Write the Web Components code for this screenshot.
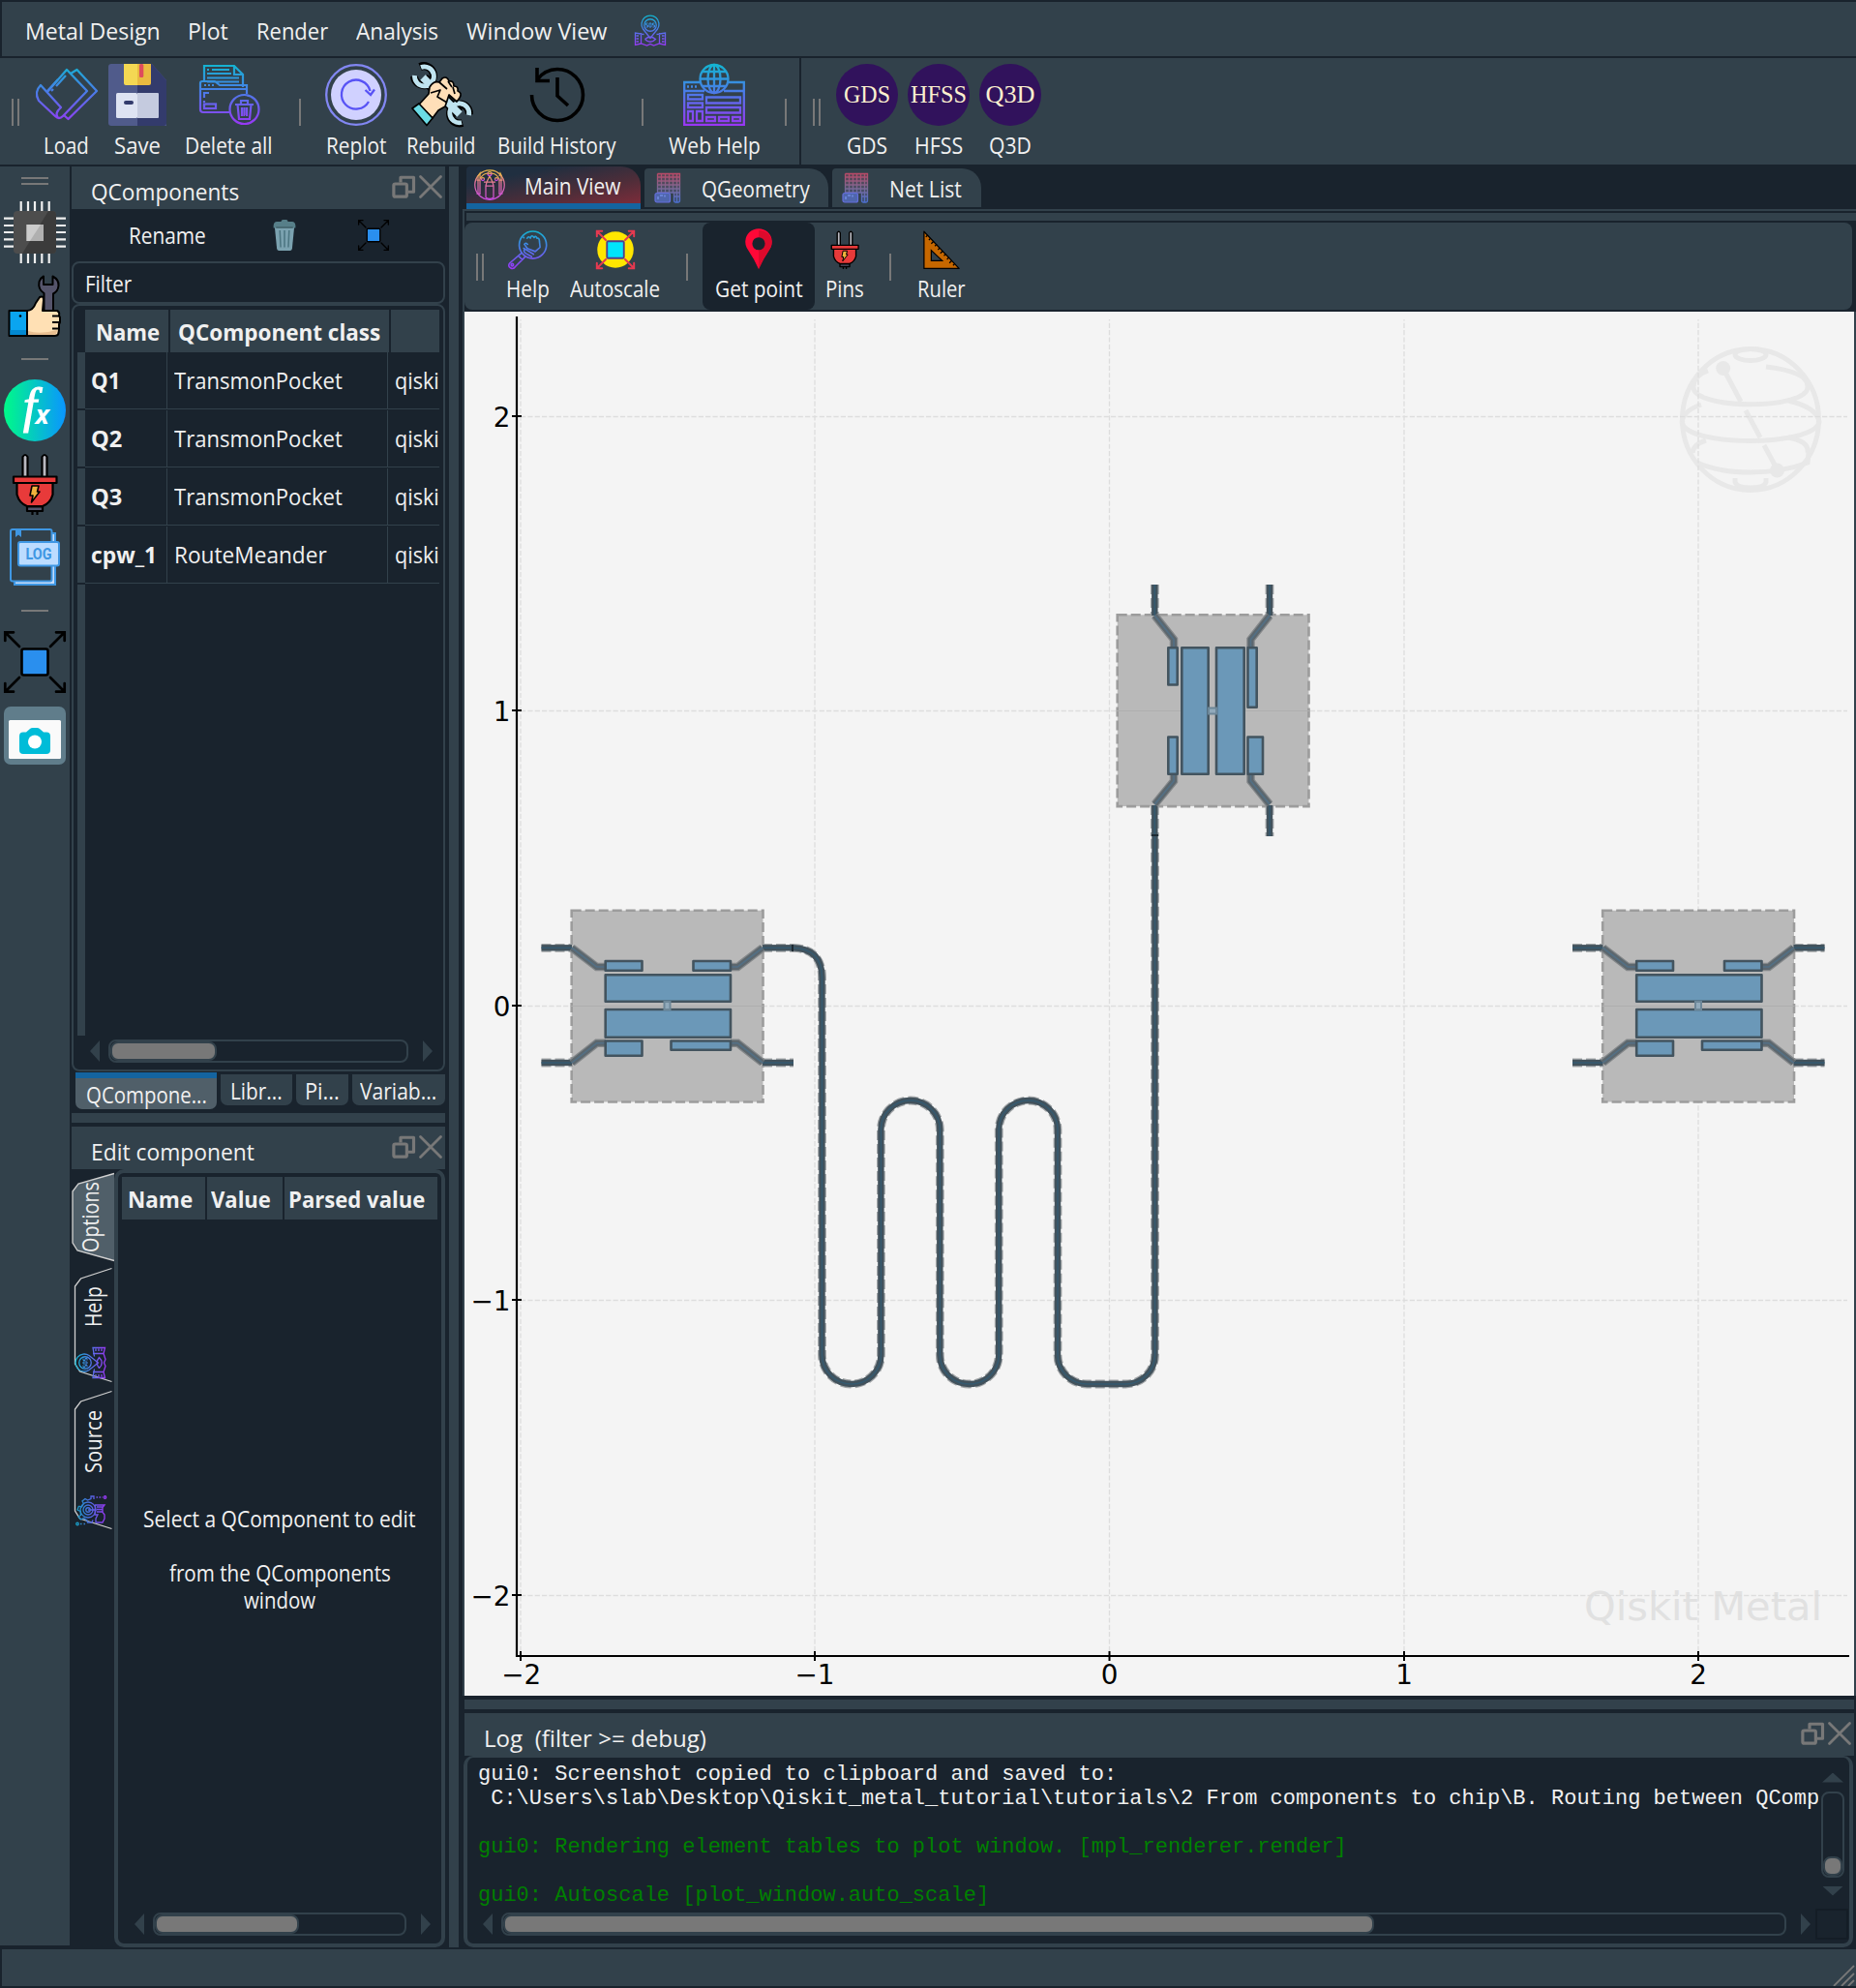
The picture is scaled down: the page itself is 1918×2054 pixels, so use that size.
<!DOCTYPE html>
<html lang="en">
<head>
<meta charset="utf-8">
<title>Qiskit Metal</title>
<style>
  html, body { margin: 0; background: #19232D; }
  body { width: 1918px; height: 2054px; overflow: hidden; font-family: "Open Sans", "Noto Sans", sans-serif; font-size: 23.3px; color: #F0F0F0; --panel: #32414B; --dark: #19232D; --grey: #787878; }
</style>
</head>
<body>
<metal-app></metal-app>
<script>
const define = (name, html, setup) => {
  const template = document.createElement('template');
  customElements.define(name, class extends HTMLElement {
    connectedCallback() {
      if (this.shadowRoot) return;
      const root = this.attachShadow({ mode: 'open' });
      template.innerHTML = typeof html === 'function' ? html(this) : html;
      root.appendChild(template.content.cloneNode(true));
      if (setup) setup(this, root);
    }
  });
};

/* ---------- icons ---------- */
const grad = (a = '#12b5d0', b = '#4a7ce8', c = '#9b35f5', box = '0 0 0 64') => {
  const [x1, y1, x2, y2] = box.split(' ');
  return `<defs><linearGradient id="g" gradientUnits="userSpaceOnUse" x1="${x1}" y1="${y1}" x2="${x2}" y2="${y2}"><stop offset="0" stop-color="${a}"/><stop offset=".45" stop-color="${b}"/><stop offset="1" stop-color="${c}"/></linearGradient></defs>`;
};
const arrows = (c, w) => `<g fill="none" stroke="${c}" stroke-width="${w}" stroke-linecap="round"><path d="M16 16L2 2M10 1.3H1.3V10M48 16L62 2M54 1.3H62.7V10M16 48L2 62M10 62.7H1.3V54M48 48L62 62M54 62.7H62.7V54"/></g>`;
const disc = (t, w) => `<circle cx="32" cy="32" r="32" fill="#31125c"/><text x="32" y="40" text-anchor="middle" textLength="${w}" lengthAdjust="spacingAndGlyphs" font-family="Liberation Serif, serif" font-size="25.5" fill="#fbf0cf">${t}</text>`;
const sos = `<g fill="none" stroke="url(#g)" stroke-width="2.6"><path d="M32 47L17 28A18 18 0 1 1 47 28Z"/><circle cx="32" cy="20" r="12.5"/><path d="M19 39L1 36V61L13 58L25 62L32 59L39 62L51 58L63 61V36L45 39M13 36V57M51 36V57M3 42H8M3 48H8M3 54H8M56 42H61M56 48H61M56 54H61M21 49Q32 40 43 49Q32 60 21 49"/><path d="M27 16H23V20H27V24H23M30 16H34V24H30ZM41 16H37V20H41V24H37" stroke-width="2"/></g>`;
const sheet = `<defs><linearGradient id="g" x2="0" y2="1"><stop stop-color="#b84a67"/><stop offset=".5" stop-color="#7b6894"/><stop offset="1" stop-color="#4c6fd0"/></linearGradient></defs><path d="M9 3H55V62H44V42H9Z" fill="url(#g)" opacity=".3"/><g fill="none" stroke="url(#g)" stroke-width="2.6"><path d="M9 3H55V59Q55 62 52 62H46Q43 62 43 59V42M9 3V42M9 10H55M9 18H55M9 26H55M9 34H55M9 42H55M17 3V42M25 3V42M33 3V42M41 3V42M49 3V62M43 50H55"/></g><rect x="4" y="43" width="31" height="19" rx="4" fill="#4f66ad" stroke="#646fdc" stroke-width="2.4"/><path d="M10 50V56M14 48H20M24 47V51" stroke="#829dff" stroke-width="2"/>`;

const ICONS = {
  load: grad() + `<g fill="none" stroke="url(#g)" stroke-width="2.3" stroke-linejoin="round"><path d="M11 30L32 6L53 28L28 54Q24 58 20 54L3 38Q-2 29 5 22L26 45Q19 51 23 56"/><path d="M36 10L42.500 6L63 28L33.500 57L29 53M12 28L23 16M16 28L18 26M21 23L31 12"/></g>`,
  save: `<path d="M5 0H47L62 17V64H5Q2 64 2 61V3Q2 0 5 0Z" fill="#505b8b"/><path d="M32 0H47L62 17V61Q62 64 59 64H32Z" fill="#333b6c"/><path d="M18 0H32V22H20Q18 22 18 20Z" fill="#f4d853"/><path d="M32 0H46V20Q46 22 44 22H32Z" fill="#e9ba40"/><rect x="34" width="4.300" height="14" rx="1.500" fill="#de4c5d"/><rect x="10" y="30" width="22" height="26" rx="1.500" fill="#dee3f2"/><path d="M32 30H53Q54 30 54 31V55Q54 56 53 56H32Z" fill="#c5cbdf"/><rect x="18" y="38" width="10" height="4" rx="2" fill="#333b6c"/>`,
  delete: grad() + `<g fill="none" stroke="url(#g)" stroke-width="2.200"><path d="M6 18V2H37L46 11V24M37 2V11H46M9 6H11M14 6H32M9 10H34M9 14.500H42M9 18.500H42M50 31V22H22L17 18H4Q2 18 2 20V47Q2 50 5 50H32M2 26H50M6 22H8M10 22H12M14 22H16M6 35V30H11M6 38V40M6 42V44"/><rect x="6" y="41.500" width="12" height="4.500"/><circle cx="47.500" cy="47" r="15"/><path d="M38 42H57M44 42V38H51V42M40.500 42L42 57H53L54.500 42M45 45V54M47.500 45V54M50 45V54"/></g>`,
  replot: `<circle cx="32" cy="32" r="30.800" fill="none" stroke="#8287f2" stroke-width="2.300"/><circle cx="32" cy="32" r="26" fill="#d0d1ff"/><path d="M45 39A15 15 0 1 1 46.500 28M41.500 27L47 32L51 26.500" fill="none" stroke="#5853f5" stroke-width="2.300"/>`,
  rebuild: `<g fill="none"><path d="M14 15L50 51" stroke="#000" stroke-width="11"/><path d="M10 3A10 10 0 1 1 4 13M54 61A10 10 0 1 1 61 52" stroke="#000" stroke-width="8"/><path d="M13 14L51 52" stroke="#bfe3ef" stroke-width="7.500"/><path d="M11 3.500A10 10 0 1 1 4.500 12M53 60.500A10 10 0 1 1 60.500 53" stroke="#bfe3ef" stroke-width="4.800"/></g><g stroke="#000" stroke-width="1.700" stroke-linejoin="round"><path d="M9 42L19 31L20 24Q24 17 30 19L33 15Q38 12 40 18Q45 17 45 23Q50 23 49 28Q54 30 51 35L48 39L40 32L36 44L29 48L23 56Z" fill="#ffdfb8"/><path d="M30 19L38 26M39 18L43 24M44 24L46 31M21 30L31 27L28 34L38 40" fill="none"/><path d="M2 46L9 41L23 56L17 63.500Z" fill="#6bdbe5"/></g>`,
  history: `<g fill="none" stroke="#000" stroke-width="3.600"><path d="M5.500 32A26.500 26.500 0 1 0 32 5.500A26.500 26.500 0 0 0 11 16.500M11 4V17.500H24M32 14V33L43 43"/></g>`,
  web: grad() + `<g fill="none" stroke="url(#g)" stroke-width="2.300"><path d="M17 19H1.200V62.800H62.800V19H47M1.200 28H22M42 28H62.800M4 23.500H6M8 23.500H10M12 23.500H14"/><circle cx="32" cy="15.500" r="14.500"/><ellipse cx="32" cy="15.500" rx="6.500" ry="14.500"/><path d="M32 1V30M17.500 15.500H46.500M20 8H44M20 23H44"/><path d="M5 32H20V36.500H5ZM5 40.500H20V45H5ZM5 49H10V59H5ZM14 49H20V59H14ZM24 34.500H59V40.500H24ZM24 45H59V50.500H24ZM24 55H33V59H24ZM37 55H47V59H37ZM51 55H59V59H51Z"/></g>`,
  gds: disc('GDS', 48), hfss: disc('HFSS', 58), q3d: disc('Q3D', 51),
  sos: grad() + sos,
  sosv: grad() + `<g transform="rotate(-90 32 32)">${sos}</g>`,
  gearv: grad('#12a0c0', '#4a6ce0', '#9b35f5', '0 0 64 0') + `<g fill="none" stroke="url(#g)" stroke-width="2.600"><path d="M7 24L13 26L17 19L14 14L20 9L25 12L32 9V4H38V10M7 24L4 32L10 35L11 43L6 46L11 52L17 49L24 54L25 58H34L36 53"/><circle cx="26" cy="32" r="16"/><circle cx="26" cy="32" r="10"/><circle cx="26" cy="32" r="4.500"/><path d="M26 32H43M41 22H60L56 27V37L60 42V50L56 58H42V50L46 42H40ZM44 26H56M44 31H56M44 36H56M43 6H46M49 6H52M55 6H56M10 61H13M17 61H20"/><circle cx="61" cy="6" r="2.500"/><circle cx="4" cy="61" r="2.500"/></g>`,
  chip: `<g stroke="#efefef" stroke-width="2.200"><path d="M17.700 0V14M25 0V14M32 0V14M39.300 0V14M46.700 0V14M17.700 50V64M25 50V64M32 50V64M39.300 50V64M46.700 50V64M0 17.700H14M0 25H14M0 32H14M0 39.300H14M0 46.700H14M50 17.700H64M50 25H64M50 32H64M50 39.300H64M50 46.700H64"/></g><rect x="10" y="10" width="44" height="44" rx="4" fill="#4d4d4d"/><path d="M46 10H50Q54 10 54 14V50Q54 54 50 54H19Z" fill="#3b3b3b"/><rect x="23.300" y="24" width="17.500" height="17" fill="#ccc"/><path d="M38 24H41V41H27Z" fill="#b0b0b0"/>`,
  thumb: `<g stroke="#000" stroke-width="2" stroke-linejoin="round"><path d="M41.500 38V19Q35 15 36.500 7Q38 3 41 1.500V10H50.500V1.500Q57 5 56.500 11Q56 17 51 19.500V38Z" fill="#55546b"/><path d="M24 37Q30 37 33 29L37 23Q41 21 41 26L40 37H55Q58 38.500 57 42L58 44V49L57 51V56L56.500 60Q56 63 52 63H24Z" fill="#ffe0b4"/><path d="M50 42.500H57M50 49H57.500M50 55.500H57" fill="none"/><path d="M5.500 37H24V63H5.500Z" fill="#0aa5f0"/></g><path d="M6.500 57H23V62H6.500Z" fill="#0288d1"/><path d="M25 58Q37 62 55 57Q55 62 50 62H25Z" fill="#e9bf91"/><circle cx="17" cy="42.500" r="1.300"/>`,
  fx: `<defs><linearGradient id="g"><stop stop-color="#00fa88"/><stop offset="1" stop-color="#0a95ff"/></linearGradient></defs><circle cx="32" cy="32" r="32" fill="url(#g)"/><text x="20" y="44" font-family="Liberation Serif, serif" font-style="italic" font-size="50" fill="#fff" stroke="#fff" stroke-width="1.200">f</text><text x="32.500" y="45.500" font-family="Open Sans, sans-serif" font-style="italic" font-weight="bold" font-size="27" fill="#fff">x</text>`,
  plug: `<g stroke="#000" stroke-width="2.200" stroke-linejoin="round"><path d="M19.500 25V4Q22 0 24.500 4V25ZM39.500 25V4Q42 0 44.500 4V25Z" fill="#b8b8c0"/><path d="M13.500 31H50.500V43Q48 52 40 55H24Q16 52 13.500 43Z" fill="#e83a3a"/><path d="M10 24.500H54.500V31H10Z" fill="#e83a3a"/><path d="M24 55.500H40V60H24Z" fill="#55546b"/><path d="M29.500 60V64M34.500 60V64" fill="none"/><path d="M29 34H36L34.500 40H37L28.500 51L30 44H27Z" fill="#f0b23c" stroke-width="1.600"/></g>`,
  log: `<path d="M50 7H53V60H11V57" fill="#c4dcfb" stroke="#3f97e3" stroke-width="2"/><rect x="7" y="3" width="42.500" height="53.500" rx="2" fill="#32414b" stroke="#3f97e3" stroke-width="2"/><path d="M12 4H18V11L15 8.500L12 11Z" fill="#3f97e3"/><rect x="15" y="16" width="42" height="24.500" rx="2" fill="#bcdcff" stroke="#3f97e3" stroke-width="2"/><text x="36" y="34" text-anchor="middle" textLength="27" lengthAdjust="spacingAndGlyphs" font-family="Roboto, sans-serif" font-weight="bold" font-size="16" fill="#3f97e3">LOG</text>`,
  expand: arrows('#000', 2.700) + `<rect x="18.500" y="18.500" width="27" height="27" rx="2" fill="#2a8fee" stroke="#000" stroke-width="2.600"/>`,
  camera: `<rect y="2" width="64" height="60" rx="7" fill="#607d8b"/><rect x="5" y="16" width="54" height="40" rx="1.500" fill="#fafafa"/><path d="M20 28.500H23L27 25Q28 24 30 24H34Q36 24 37 25L41 28.500H44Q48 28.500 48 32.500V47Q48 51 44 51H20Q16 51 16 47V32.500Q16 28.500 20 28.500Z" fill="#00bcd8"/><circle cx="32" cy="38.500" r="7" fill="#fff"/>`,
  trash: `<path d="M9 16H55L50 60Q49 64 45 64H19Q15 64 14 60Z" fill="#7ba2b0"/><path d="M6 12Q7 4 14 4H24Q24 0 29 0H36Q40 0 40 4H50Q57 4 58 12V17H6Z" fill="#577f89"/><path d="M12 16H52" stroke="#40606a" stroke-width="3"/><path d="M21 22L23 57M32 22V57M43 22L41 57" stroke="#4c7581" stroke-width="3.500" fill="none"/>`,
  float: `<g fill="none" stroke="#787878" stroke-width="8.500" stroke-linejoin="round"><path d="M24 20V6H60V46H44"/><rect x="5" y="24" width="36" height="35" rx="4"/></g>`,
  close: `<path d="M4 4L60 60M60 4L4 60" stroke="#787878" stroke-width="7.500" stroke-linecap="round"/>`,
  pens: `<defs><linearGradient id="g" x2="0" y2="1"><stop stop-color="#e8b745"/><stop offset=".4" stop-color="#e3749a"/><stop offset="1" stop-color="#c64be0"/></linearGradient></defs><g fill="none" stroke="url(#g)" stroke-width="2.500"><circle cx="32" cy="32" r="30.500"/><path d="M24 58V34H40V58Q32 64 24 58M24 34L26 26H38L40 34M20 26H44M26 26L32 14L38 26M8 50V14L12 8V52M12 20Q20 6 32 9Q44 6 52 20V52M56 14V50M5 22H12M52 22H59M52 14L54 8L57 14M5 50H12M52 50H59"/><circle cx="32" cy="9" r="4"/><circle cx="18" cy="20" r="3"/><circle cx="46" cy="20" r="3"/></g>`,
  sheet,
  find: grad() + `<g fill="none" stroke="url(#g)" stroke-width="2.600" stroke-linejoin="round"><circle cx="41" cy="24" r="22.500"/><path d="M23 37L3 54Q-1 59 4 62Q9 65 12 60L29 43M17 42L24 49M31 14Q34 8 37 13Q39 6 43 12Q46 8 48 13Q52 12 52 19L53 28L45 35L32 30L27 23Q29 19 33 24M25 29L43 40M28 30Q24 36 31 39L40 44M25 13L27 11"/><circle cx="7" cy="57" r="2"/></g>`,
  autoscale: `<circle cx="32" cy="32" r="30" fill="#ffe600"/>${arrows('#e63950', 3.200)}<rect x="18" y="18" width="28" height="28" rx="2" fill="#00e5fb" stroke="#4f3f8e" stroke-width="3"/>`,
  pin: `<path d="M32 64Q24 46 15 33A22 22 0 1 1 49 33Q40 46 32 64Z" fill="#ff0837"/><path d="M32 0Q53 1 53.500 21Q53 28 49 33Q40 46 32 64Z" fill="#dd0a2c"/><circle cx="32" cy="22" r="10.500" fill="#19232D"/>`,
  ruler: `<path d="M3 2V63H61Z" fill="#c66700" stroke="#000" stroke-width="2" stroke-linejoin="round"/><path d="M15 33V50H33Z" fill="#32414b" stroke="#000" stroke-width="2"/><path d="M9 8L6 11M14 13L11 16M19 18L15 22M24 23L21 26M29 29L26 32M34 34L30 38M39 39L36 42M44 45L41 48M49 50L45 54M54 55L51 58" stroke="#000" stroke-width="2"/>`
};
define('q-icon', el => `<style>:host{display:block;flex:none;width:${el.getAttribute('w') || el.getAttribute('s')}px;height:${el.getAttribute('s')}px}svg{display:block;width:100%;height:100%;overflow:visible}</style><svg viewBox="0 0 64 64" preserveAspectRatio="${el.hasAttribute('w') ? 'none' : 'xMidYMid'}">${ICONS[el.getAttribute('n')]}</svg>`);

/* A label that is condensed or widened to a given width. */
define('fit-text', `<style>:host{display:block;flex:none;white-space:pre;line-height:32px;height:32px}span{display:inline-block;transform-origin:0 50%}</style><span><slot></slot></span>`, (el, root) => {
  const span = root.querySelector('span'), w = +el.getAttribute('w');
  const fit = () => {
    const own = span.offsetWidth;
    if (own) span.style.transform = `scaleX(${(w + 1.5) / own})`;
    span.style.marginLeft = '-.8px';
  };
  el.style.width = w + 'px';
  fit();
  addEventListener('load', fit);
});

define('menu-bar', `<style>:host{display:flex;align-items:center;box-sizing:border-box;height:56px;margin:2px 0 0 2px;padding:3px 0 0 25px;background:var(--panel)}</style><slot></slot>`);
define('tool-bar', `<style>:host{display:flex;background:var(--panel)}</style><slot></slot>`);
define('tool-button', el => `<style>:host{display:flex;flex:none;flex-direction:column;align-items:center;gap:4px}</style><q-icon n="${el.getAttribute('icon')}" s="${el.getAttribute('s') || 64}"></q-icon><fit-text w="${el.getAttribute('w')}">${el.getAttribute('label')}</fit-text>`);
define('bar-mark', `<style>:host{display:block;flex:none;align-self:center;width:2px;height:28px;margin-top:2px;background:var(--grey)}:host([grip]){width:4px;background:none;border:solid var(--grey);border-width:0 2px}:host([row]){width:28px;height:2px;margin-top:0}:host([row][grip]){width:28px;height:4px;border-width:2px 0}</style>`);

define('dock-title', el => `<style>:host{display:flex;flex:none;align-items:center;box-sizing:border-box;height:44px;padding:0 3px 0 21px;background:var(--panel)}fit-text{margin-top:7px}i{flex:1}q-icon{margin:-2px 0 0 4px}</style><fit-text w="${el.getAttribute('w')}"><slot></slot></fit-text><i></i><q-icon n="float" s="24"></q-icon><q-icon n="close" s="24"></q-icon>`);

define('scroll-bar', el => {
  const v = el.hasAttribute('v');
  return `<style>:host{display:flex;flex:none;flex-direction:${v ? 'column' : 'row'};align-items:center}
  .a,.b{flex:none;width:${v ? 22 : 10}px;height:${v ? 10 : 22}px;background:var(--panel)}
  .a{clip-path:polygon(${v ? '50% 0,100% 100%,0 100%' : '0 50%,100% 0,100% 100%'});margin:${v ? '0 0 9px' : '0 9px 0 0'}}
  .b{clip-path:polygon(${v ? '0 0,100% 0,50% 100%' : '0 0,100% 50%,0 100%'});margin:${v ? '9px 0 0' : '0 0 0 15px'}}
  .t{flex:1;display:flex;box-sizing:border-box;${v ? 'width' : 'height'}:24px;border:2px solid var(--panel);border-radius:8px;${v ? 'flex-direction:column;justify-content:flex-end' : ''}}
  .h{box-sizing:border-box;${v ? 'height' : 'width'}:${el.getAttribute('size')}px;border:2px solid var(--panel);border-radius:8px;background:var(--grey)}</style>
  <div class="a"></div><div class="t"><div class="h"></div></div><div class="b"></div>`;
});

define('component-table', el => {
  const rows = [['Q1', 29, 'TransmonPocket', 172], ['Q2', 31, 'TransmonPocket', 172], ['Q3', 31, 'TransmonPocket', 172], ['cpw_1', 67, 'RouteMeander', 156]];
  return `<style>:host{display:flex;flex-direction:column;box-sizing:border-box;height:793px;padding:4px 4px 7px;border:2px solid var(--panel);border-radius:8px}
  .head{display:flex;gap:2px;margin-left:8px;height:44px;font-weight:bold}.head div{box-sizing:border-box;background:var(--panel);display:flex;align-items:center}
  .head div{padding-top:1px}
  .row{display:flex;height:60px}.row .n,.rest .n{width:8px;flex:none;background:var(--panel)}.row .n{height:58px}.row:first-child .n{height:60px}
  .cell{box-sizing:border-box;height:59px;display:flex;align-items:center;border:solid var(--panel);border-width:0 1px 1px 0;padding-left:7px}.row b{display:contents}
  .rest{flex:1;display:flex}scroll-bar{margin:4px 7px 0 13px}</style>
  <div class="head"><div style="width:86px;padding-left:12px"><fit-text w="65">Name</fit-text></div><div style="width:226px;padding-left:9px"><fit-text w="208">QComponent class</fit-text></div><div style="width:50px"></div></div>
  ${rows.map(r => `<div class="row"><div class="n"></div><div class="cell" style="width:85px"><b style="font-weight:bold"><fit-text w="${r[1]}">${r[0]}</fit-text></b></div><div class="cell" style="width:228px;padding-left:8px"><fit-text w="${r[3]}">${r[2]}</fit-text></div><div class="cell" style="width:53px;border-right:0;padding-left:8px"><fit-text w="44">qiski</fit-text></div></div>`).join('')}
  <div class="rest"><div class="n"></div></div><scroll-bar size="110"></scroll-bar>`;
});

define('bottom-tab', el => `<style>:host{display:flex;flex:none;align-items:center;justify-content:center;box-sizing:border-box;height:32px;margin-top:2px;padding-top:2px;background:var(--panel);border-radius:0 0 7px 7px}:host([on]){height:38px;margin-top:0;background:#505F69;border-top:6px solid #1464A0}</style><fit-text w="${el.getAttribute('w')}"><slot></slot></fit-text>`);

define('view-tab', el => `<style>:host{display:flex;flex:none;align-items:center;box-sizing:border-box;height:40px;margin-top:2px;padding:0 0 0 9px;background:var(--panel);border-radius:4px 20px 0 0}:host([on]){height:44px;margin-top:0;padding-left:8px;border-bottom:6px solid #1464A0;background:linear-gradient(168deg,#202f40 25%,#4d2d39 65%,#7c2c3a)}fit-text{margin:2px 0 0 ${el.hasAttribute('on') ? 21 : 19}px}</style><q-icon n="${el.getAttribute('icon')}" s="32"></q-icon><fit-text w="${el.getAttribute('w')}"><slot></slot></fit-text>`);

/* Side tab with slanted edges; its label reads upwards. */
define('side-tab', el => {
  const h = +el.getAttribute('h'), on = el.hasAttribute('on'), l = on ? 1 : 3.5, r = on ? 44 : 41.5;
  const [y1, y2] = el.getAttribute('span').split(',').map(Number), icon = el.getAttribute('icon');
  return `<style>:host{display:block;flex:none;height:${h}px}svg{display:block;overflow:visible}</style><svg width="44" height="${h}"><path d="M${r} .5L${l + 6} 11L${l} 19V${h - 19}L${l + 5} ${h - 11}L${r} ${h - .5}" fill="${on ? '#505F69' : 'none'}" stroke="#d0d0d0" stroke-width="1.300"/>
  <text transform="translate(${on ? 28 : 30.500} ${y2}) rotate(-90)" textLength="${y2 - y1}" lengthAdjust="spacingAndGlyphs" font-size="23.300" fill="#F0F0F0">${el.getAttribute('label')}</text>
  ${icon ? `<svg x="4" y="${h - 36}" width="32" height="32" viewBox="0 0 64 64">${ICONS[icon]}</svg>` : ''}</svg>`;
});

define('edit-panel', `<style>:host{display:flex;height:804px}.tabs{width:44px;display:flex;flex-direction:column;padding-top:4px}
  .frame{flex:1;display:flex;flex-direction:column;box-sizing:border-box;border:4px solid var(--panel);border-radius:10px;padding:4px}
  .head{display:flex;gap:2px;height:44px;font-weight:bold}.head div{display:flex;align-items:center;box-sizing:border-box;background:var(--panel);padding:1px 0 0 7px}
  .msg{flex:1;display:flex;flex-direction:column;align-items:center;padding-top:293px}scroll-bar{margin:0 7px 4px 13px}</style>
  <div class="tabs"><side-tab on h="91" label="Options" span="9,82"></side-tab><side-tab style="margin-top:7px" h="118" label="Help" span="19,61" icon="sosv"></side-tab><side-tab style="margin-top:9px" h="143" label="Source" span="20,85" icon="gearv"></side-tab></div>
  <div class="frame"><div class="head"><div style="width:86px"><fit-text w="66">Name</fit-text></div><div style="width:78px;padding-left:5px"><fit-text w="60">Value</fit-text></div><div style="width:158px;padding-left:5px"><fit-text w="140">Parsed value</fit-text></div></div>
  <div class="msg"><fit-text w="280">Select a QComponent to edit</fit-text><fit-text w="227" style="margin-top:24px">from the QComponents</fit-text><fit-text w="73" style="margin-top:-4px">window</fit-text></div>
  <scroll-bar size="149"></scroll-bar></div>`);

/* Design canvas: chip layout in plot coordinates, 304.5 px per mm. */
define('design-plot', () => {
  const X = [538, 842, 1146.5, 1451, 1755], Y = [430.5, 734.5, 1039.5, 1343.5, 1648.5], L = ['2', '1', '0', '−1', '−2'];
  const line = d => `<path d="${d}" stroke="#a2a5a7" stroke-width="8.800" stroke-dasharray="10 4"/><path d="${d}" stroke="#42525c" stroke-width="6.400"/><path d="${d}" stroke="#355a70" stroke-width="1.500"/>`;
  const inner = d => `<path d="${d}" stroke="#85888a" stroke-width="8.500"/><path d="${d}" stroke="#5c676e" stroke-width="6"/><path d="${d}" stroke="#527086" stroke-width="1.500"/>`;
  const pads = list => list.map(([a, b, c, d]) => `<rect x="${a}" y="${b}" width="${c - a}" height="${d - b}"/>`).join('');
  const pocket = (x, y) => `<rect x="${x}" y="${y}" width="197.800" height="197.800" fill="#b9b9b9" stroke="#9c9c9c" stroke-width="2.600" stroke-dasharray="10 4"/>`;
  const wide = dx => `<g transform="translate(${dx} 0)">${pocket(590.7, 940.7)}<path d="M590 1039.500H789" stroke="#aeaeae"/>
    <g fill="none">${line('M559.500 979.300H591')}${line('M559.500 1098H591')}${line('M788 979.300H820')}${line('M788 1098H820')}${inner('M591 979.300L616.700 999H625.700')}${inner('M755 999H762.300L788 979.300')}${inner('M591 1098L616.700 1077.700H625.700')}${inner('M755 1077.700H762.300L788 1098')}</g>
    <g fill="#6b98b8" stroke="#43545f" stroke-width="2.600" stroke-linejoin="round">${pads([[625.7, 1007.3, 755, 1034.7], [625.7, 1043, 755, 1071.7], [625.7, 993, 663.5, 1002.7], [716.5, 993, 755, 1002.7], [625.7, 1075.5, 663.5, 1090.7], [693.5, 1075.5, 755, 1084.7]])}</g>
    <rect x="686.500" y="1035" width="6" height="8" fill="#91aabb" stroke="#6d8798" stroke-width="2"/></g>`;
  const route = 'M819 979.300Q849.500 980 849.500 1010V1400A30.400 30 0 0 0 880 1430A30.400 30 0 0 0 910.400 1400V1167A30.400 30 0 0 1 940.800 1137A30.400 30 0 0 1 971.300 1167V1400A30.400 30 0 0 0 1001.700 1430A30.400 30 0 0 0 1032.200 1400V1167A30.400 30 0 0 1 1062.600 1137A30.400 30 0 0 1 1093 1167V1400A30.400 30 0 0 0 1123.500 1430H1163A30.400 30 0 0 0 1193.500 1400V863';
  return `<style>:host{display:block;width:1436px;height:1430px;background:#f4f4f4;border-right:2px solid var(--panel)}svg{display:block}</style>
  <svg width="1436" height="1430" viewBox="480 322 1436 1430" font-family="DejaVu Sans, sans-serif">
  <g fill="none" stroke="#e8e8e8" stroke-width="5"><ellipse cx="1809" cy="433.500" rx="70.500" ry="73"/><ellipse cx="1809" cy="366.500" rx="16" ry="6"/><path d="M1793 494V498Q1795 504 1809 504T1825 498V494"/>
  <path d="M1750 399C1748 424 1870 424 1868 399Q1868 384 1825 379M1750 399Q1751 388 1765 383"/><path d="M1738 436C1742 462 1874 462 1880 436Q1878 421 1848 414M1738 436Q1740 424 1758 418"/><path d="M1749 468Q1750 459 1763 455M1868 468Q1870 456 1848 452M1754 478Q1776 488 1809 488T1868 478L1869 468"/><path d="M1782 383L1799 415M1804 424L1819 452M1823 460L1836 484"/></g><circle cx="1780.700" cy="380.500" r="7.500" fill="#e8e8e8"/><circle cx="1836.500" cy="486" r="7.500" fill="#e8e8e8"/>
  <text x="1637" y="1674" font-size="41" textLength="246" lengthAdjust="spacingAndGlyphs" fill="#e1e1e1">Qiskit Metal</text>
  <g stroke="#dddddd" stroke-width="1.300" stroke-dasharray="5.200 2.150">${X.map(x => `<path d="M${x} 1706V330"/>`).join('')}${Y.map(y => `<path d="M538 ${y}H1909"/>`).join('')}</g>
  <path d="M534 327V1711H1911" fill="none" stroke="#000" stroke-width="2.200"/>
  <g stroke="#000" stroke-width="2">${X.map(x => `<path d="M${x} 1706V1716"/>`).join('')}${Y.map(y => `<path d="M529 ${y - .5}H539"/>`).join('')}</g>
  <g font-size="27.800" fill="#000">${Y.map((y, i) => `<text x="527.500" y="${y + 10.5}" text-anchor="end">${L[i]}</text>`).join('')}${X.map((x, i) => `<text x="${x + (i ? 0 : .7)}" y="1740" text-anchor="middle">${L[4 - i]}</text>`).join('')}</g>
  ${wide(0)}${wide(1065.5)}
  ${pocket(1154.7, 635.3)}<path d="M1154 734.500H1353" stroke="#aeaeae"/>
  <g fill="none">${line('M1193.300 604V636')}${line('M1312 604V636')}${line('M1193.300 832V864')}${line('M1312 832V864')}${inner('M1193.300 636L1213 660.700V669.300')}${inner('M1312 636L1292.500 660.700V669.300')}${inner('M1213 799.700V807L1193.300 831')}${inner('M1292.500 799.700V807L1312 831')}${line(route)}<path d="M819 976V983M1190 863H1197" stroke="#1d2a33" stroke-width="2"/></g>
  <g fill="#6b98b8" stroke="#43545f" stroke-width="2.600" stroke-linejoin="round">${pads([[1221.3, 669.3, 1248.7, 799.7], [1257, 669.3, 1285.7, 799.7], [1207.3, 669.3, 1216.7, 707.5], [1289.5, 669.3, 1298.7, 730.7], [1207.3, 761.5, 1216.7, 799.7], [1289.5, 761.5, 1305, 799.7]])}</g>
  <rect x="1249" y="731.500" width="8" height="6" fill="#91aabb" stroke="#6d8798" stroke-width="2"/>
  </svg>`;
});

define('log-view', `<style>:host{display:flex;flex-direction:column;box-sizing:border-box;height:198px;width:1436px;border:solid var(--panel);border-width:2px 4px 4px;border-radius:10px}
  .top{display:flex;height:154px}.text{width:1396px;overflow:hidden;box-sizing:border-box;padding:4.500px 0 0 11px;font:22px/25px "Liberation Mono",monospace;white-space:pre}.ok{color:#008000}
  .text div{height:25px}.top scroll-bar{height:127px;margin:15.500px 0 0 3px}.bot{display:flex;align-items:center;height:36px}.bot scroll-bar{width:1372px;margin-left:16px}.bot i{box-sizing:border-box;width:34px;height:32px;margin-left:5px;border:2px solid #141d26}</style>
  <div class="top"><div class="text"><div>gui0: Screenshot copied to clipboard and saved to:</div><div> C:\\Users\\slab\\Desktop\\Qiskit_metal_tutorial\\tutorials\\2 From components to chip\\B. Routing between QComp</div><div></div><div class="ok">gui0: Rendering element tables to plot window. [mpl_renderer.render]</div><div></div><div class="ok">gui0: Autoscale [plot_window.auto_scale]</div></div><scroll-bar v size="20"></scroll-bar></div>
  <div class="bot"><scroll-bar size="900"></scroll-bar><i></i></div>`);

define('status-bar', `<style>:host{display:flex;justify-content:flex-end;align-items:flex-end;height:38px;margin:2px 0 0 2px;background:var(--panel)}svg{display:block}</style><svg width="24" height="22"><path d="M1 22L22 1M9 22L22 9M16 22L22 16" stroke="#787878" stroke-width="1.800"/></svg>`);

define('metal-app', `<style>:host{display:block}
  .bars{display:flex;gap:2px;height:110px;margin-top:2px}.bars tool-button{margin-top:6px}
  .main{display:flex;height:1840px;margin-top:2px}
  .side{display:flex;flex-direction:column;align-items:center;width:72px;height:1838px;box-sizing:border-box;padding:11px 17px 0 0;background:var(--panel)}
  .side q-icon{margin-left:17px}.side bar-mark{margin-left:17px}
  .docks{width:386px;margin-left:2px}.split{width:10px;margin:0 4px;background:var(--panel)}.hsplit{height:10px;background:var(--panel)}
  .acts{display:flex;height:54px;align-items:center}.filter{display:flex;align-items:center;box-sizing:border-box;height:44px;padding:2px 0 0 13px;border:2px solid var(--panel);border-radius:8px}
  .tabs{display:flex;height:42px;gap:4px;padding:1px 0 4px 4px}.right{flex:1}
  .views{display:flex;gap:4px;height:44px;padding-left:4px}.pane{border:solid var(--panel);border-width:2px 0 0 2px;height:1534px}
  .strip{height:8px;margin:2px 0 2px 2px;background:var(--panel)}.pane tool-bar{height:90px;margin:0 4px 2px 0;border-radius:8px}.pane tool-button{margin-top:8px}
  .pane .on{box-sizing:border-box;width:116px;height:90px;margin:0 0 0 15px;padding-top:8px;background:var(--dark);border-radius:8px}</style>
  <menu-bar><fit-text w="138">Metal Design</fit-text><fit-text w="40" style="margin-left:30px">Plot</fit-text><fit-text w="73" style="margin-left:31px">Render</fit-text><fit-text w="84" style="margin-left:30px">Analysis</fit-text><fit-text w="144" style="margin-left:30px">Window View</fit-text><q-icon n="sos" s="32" style="margin-left:29px"></q-icon></menu-bar>
  <div class="bars"><tool-bar style="width:826px"><bar-mark grip style="margin-left:12px"></bar-mark>
    <tool-button style="width:65px;margin-left:16px" icon="load" label="Load" w="45"></tool-button><tool-button style="width:64px;margin-left:9px" icon="save" label="Save" w="46"></tool-button><tool-button style="width:89px;margin-left:18px" icon="delete" label="Delete all" w="89"></tool-button>
    <bar-mark style="margin-left:28px"></bar-mark><tool-button style="width:64px;margin-left:25px" icon="replot" label="Replot" w="61"></tool-button><tool-button style="width:70px;margin-left:21px" icon="rebuild" label="Rebuild" w="70"></tool-button><tool-button style="width:121px;margin-left:24px" icon="history" label="Build History" w="121"></tool-button>
    <bar-mark style="margin-left:27px"></bar-mark><tool-button style="width:94px;margin-left:26px" icon="web" label="Web Help" w="93"></tool-button><bar-mark style="margin-left:26px"></bar-mark></tool-bar>
    <tool-bar style="flex:1"><bar-mark grip style="margin-left:12px"></bar-mark><tool-button style="width:64px;margin-left:16px" icon="gds" label="GDS" w="41"></tool-button><tool-button style="width:64px;margin-left:10px" icon="hfss" label="HFSS" w="49"></tool-button><tool-button style="width:64px;margin-left:10px" icon="q3d" label="Q3D" w="42"></tool-button></tool-bar></div>
  <div class="main">
    <div class="side"><bar-mark row grip></bar-mark><q-icon n="chip" s="64" style="margin-top:17px"></q-icon><q-icon n="thumb" s="64" style="margin-top:12px"></q-icon><bar-mark row style="margin-top:22px"></bar-mark><q-icon n="fx" s="64" style="margin-top:20px"></q-icon><q-icon n="plug" s="64" style="margin-top:12px"></q-icon><q-icon n="log" s="64" style="margin-top:12px"></q-icon><bar-mark row style="margin-top:22px"></bar-mark><q-icon n="expand" s="64" style="margin-top:20px"></q-icon><q-icon n="camera" s="64" style="margin-top:12px"></q-icon></div>
    <div class="docks"><dock-title w="152">QComponents</dock-title>
      <div class="acts"><fit-text w="78" style="margin-left:60px">Rename</fit-text><q-icon n="trash" w="28" s="32" style="margin-left:68px"></q-icon><q-icon n="expand" s="32" style="margin-left:62px"></q-icon></div>
      <div class="filter"><fit-text w="47">Filter</fit-text></div><component-table></component-table>
      <div class="tabs"><bottom-tab on style="width:146px" w="123">QCompone...</bottom-tab><bottom-tab style="width:74px" w="52">Libr...</bottom-tab><bottom-tab style="width:54px" w="34">Pi...</bottom-tab><bottom-tab style="width:96px" w="78">Variab...</bottom-tab></div>
      <div class="hsplit" style="margin-bottom:4px;margin-top:-4px"></div><dock-title w="167">Edit component</dock-title><edit-panel></edit-panel></div>
    <div class="split"></div>
    <div class="right"><div class="views"><view-tab on style="width:180px" icon="pens" w="98">Main View</view-tab><view-tab style="width:190px" icon="sheet" w="110">QGeometry</view-tab><view-tab style="width:154px" icon="sheet" w="73">Net List</view-tab></div>
      <div class="pane"><div class="strip"></div><tool-bar><bar-mark grip style="margin-left:12px"></bar-mark><tool-button style="width:44px;margin-left:23px" s="40" icon="find" label="Help" w="43"></tool-button><tool-button style="width:92px;margin-left:23px" s="40" icon="autoscale" label="Autoscale" w="92"></tool-button><bar-mark style="margin-left:27px"></bar-mark><tool-button class="on" s="40" icon="pin" label="Get point" w="89"></tool-button><tool-button style="width:40px;margin-left:11px" s="40" icon="plug" label="Pins" w="38"></tool-button><bar-mark style="margin-left:26px"></bar-mark><tool-button style="width:50px;margin-left:27px" s="40" icon="ruler" label="Ruler" w="48"></tool-button></tool-bar><design-plot></design-plot></div>
      <div class="hsplit" style="margin:4px 2px 4px 2px"></div><dock-title w="228" style="margin:0 2px">Log  (filter &gt;= debug)</dock-title><log-view style="margin-left:1px"></log-view></div>
  </div>
  <status-bar></status-bar>`);
</script>
</body>
</html>
